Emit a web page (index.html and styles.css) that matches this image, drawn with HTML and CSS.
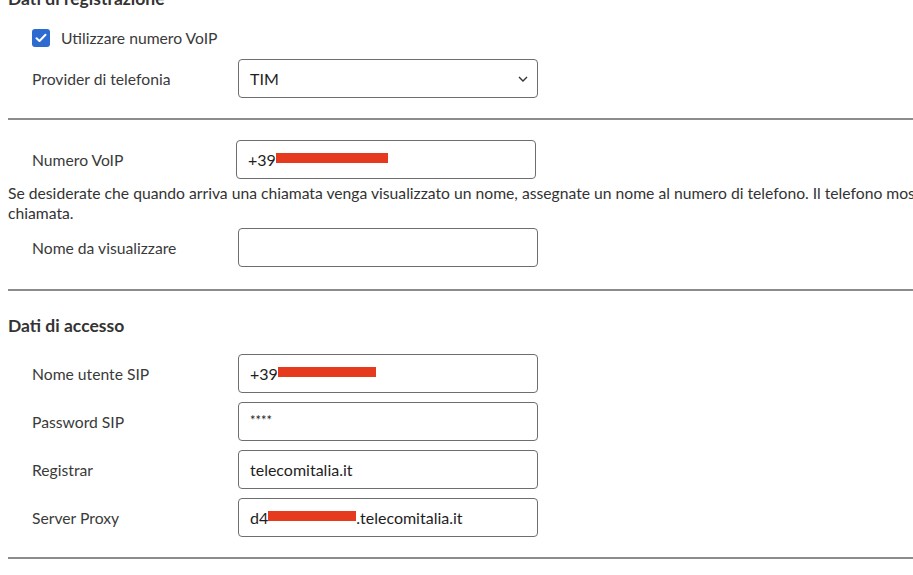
FILE: index.html
```html
<!DOCTYPE html>
<html lang="it">
<head>
<meta charset="utf-8">
<title>Telefonia</title>
<link rel="stylesheet" href="styles.css">
</head>
<body>
<div class="page">
  <h2 class="heading heading-top">Dati di registrazione</h2>

  <div class="check-row">
    <span class="checkbox">
      <svg width="12" height="10" viewBox="0 0 12 10"><path d="M1.5 5.2 L4.5 8 L10.5 1.8" fill="none" stroke="#fff" stroke-width="2" stroke-linecap="round" stroke-linejoin="round"/></svg>
    </span>
    <span class="check-label">Utilizzare numero VoIP</span>
  </div>

  <div class="row row-select">
    <span class="label">Provider di telefonia</span>
    <div class="field select">
      <span class="value">TIM</span>
      <svg class="chevron" width="10" height="6" viewBox="0 0 10 6"><path d="M1 1 L5 5 L9 1" fill="none" stroke="#333" stroke-width="1.4"/></svg>
    </div>
  </div>

  <hr class="divider divider-1">

  <div class="row row-voip">
    <span class="label label-voip">Numero VoIP</span>
    <div class="field"><span class="value">+39</span><span class="redact" style="width:112px"></span></div>
  </div>

  <p class="help">Se desiderate che quando arriva una chiamata venga visualizzato un nome, assegnate un nome al numero di telefono. Il telefono mostrerà il nome durante la chiamata.</p>

  <div class="row row-name">
    <span class="label">Nome da visualizzare</span>
    <div class="field"></div>
  </div>

  <hr class="divider divider-2">

  <h2 class="heading heading-access">Dati di accesso</h2>

  <div class="rows">
    <div class="row">
      <span class="label">Nome utente SIP</span>
      <div class="field"><span class="value">+39</span><span class="redact" style="width:98px"></span></div>
    </div>
    <div class="row">
      <span class="label">Password SIP</span>
      <div class="field"><span class="value pw">****</span></div>
    </div>
    <div class="row">
      <span class="label">Registrar</span>
      <div class="field"><span class="value">telecomitalia.it</span></div>
    </div>
    <div class="row">
      <span class="label">Server Proxy</span>
      <div class="field"><span class="value">d4</span><span class="redact" style="width:88px"></span><span class="value">.telecomitalia.it</span></div>
    </div>
  </div>

  <hr class="divider divider-3">
</div>
</body>
</html>
```

FILE: styles.css
```css
html, body {
  margin: 0;
  padding: 0;
  background: #fff;
}

body {
  margin: 0 0 0 8px;
  font-family: Lato, "Noto Sans", sans-serif;
  font-size: 15.7px;
  color: #3a3a3a;
  overflow: hidden;
}

.page {
  width: 1100px;
}

.heading {
  margin: 0;
  font-size: 17.5px;
  font-weight: 700;
  line-height: 24px;
  color: #333;
}

.heading-top {
  margin-top: -13px;
}

.check-row {
  display: flex;
  align-items: center;
  height: 20px;
  margin: 17px 0 0 24px;
}

.checkbox {
  width: 18px;
  height: 18px;
  border-radius: 3px;
  background: #2e6bd0;
  display: flex;
  align-items: center;
  justify-content: center;
  box-sizing: border-box;
}

.check-label {
  margin-left: 11px;
  line-height: 20px;
}

.rows {
  display: flex;
  flex-direction: column;
  gap: 9px;
  margin-top: 16px;
}

.row {
  display: flex;
  align-items: center;
  padding-left: 24px;
}

.row-select {
  margin-top: 11px;
}

.label {
  width: 206px;
  flex: none;
  line-height: 20px;
}

.label-voip {
  width: 204px;
}

.field {
  width: 300px;
  height: 39px;
  box-sizing: border-box;
  border: 1px solid #6e6e6e;
  border-radius: 4px;
  padding: 0 11px;
  display: flex;
  align-items: center;
  color: #1e1e1e;
  background: #fff;
  font-size: 16px;
}

.value {
  white-space: pre;
}

.pw {
  font-size: 13px;
  position: relative;
  top: -2px;
}

.redact {
  display: inline-block;
  height: 10px;
  background: #e63a1f;
  margin-top: -3px;
}

.select {
  justify-content: space-between;
  padding-right: 9px;
}

.chevron {
  margin-top: 1px;
}

.divider {
  border: 0;
  height: 2px;
  background: #8c8c8c;
  margin: 0;
}

.divider-1 {
  margin-top: 20px;
}

.row-voip {
  margin-top: 20px;
}

.help {
  margin: 4px 0 0 0;
  line-height: 20px;
  color: #333;
}

.row-name {
  margin-top: 5px;
}

.divider-2 {
  margin-top: 22px;
}

.heading-access {
  margin-top: 23px;
}

.divider-3 {
  margin-top: 20px;
}
```
